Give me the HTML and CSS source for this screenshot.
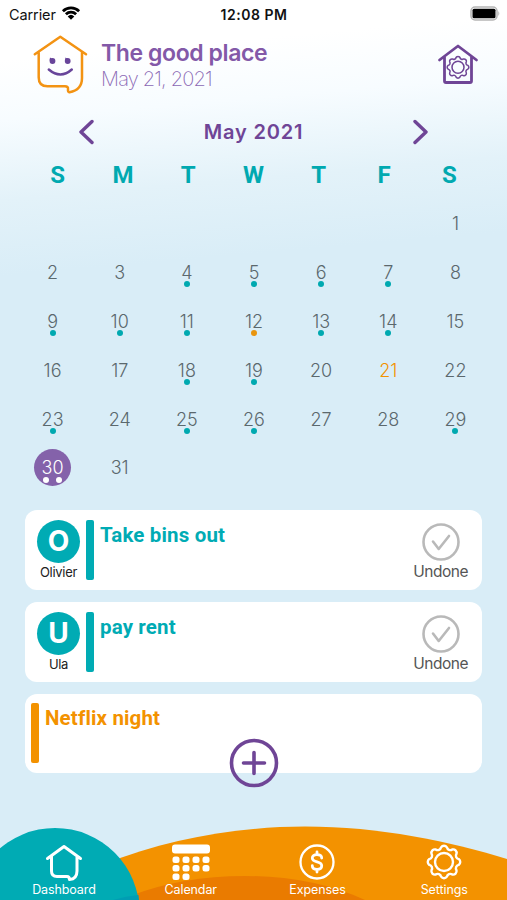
FILE: index.html
```html
<!DOCTYPE html>
<html lang="en">
<head>
    <meta charset="UTF-8">
    <meta name="viewport" content="width=device-width, initial-scale=1.0">
    <title>Dashboard</title>
    <link rel="stylesheet" href="styles.css">
</head>
<body>
    <svg class="sprite" width="0" height="0">
        <symbol id="gear" viewBox="-18 -18 36 36">
            <path d="M14.7-2.9A3.5 3.5 0 0 1 14.7 2.9A3.5 3.5 0 0 0 12.5 8.3A3.5 3.5 0 0 1 8.3 12.5A3.5 3.5 0 0 0 2.9 14.7A3.5 3.5 0 0 1-2.9 14.7A3.5 3.5 0 0 0-8.3 12.5A3.5 3.5 0 0 1-12.5 8.3A3.5 3.5 0 0 0-14.7 2.9A3.5 3.5 0 0 1-14.7-2.9A3.5 3.5 0 0 0-12.5-8.3A3.5 3.5 0 0 1-8.3-12.5A3.5 3.5 0 0 0-2.9-14.7A3.5 3.5 0 0 1 2.9-14.7A3.5 3.5 0 0 0 8.3-12.5A3.5 3.5 0 0 1 12.5-8.3A3.5 3.5 0 0 0 14.7-2.9Z"/>
            <circle r="9"/>
        </symbol>
        <symbol id="check" viewBox="0 0 38 38">
            <circle cx="19" cy="19" r="17.5"/>
            <path d="M11 18.5l5.7 7.5L27 13"/>
        </symbol>
    </svg>

    <div class="status-bar">
        <div class="carrier">
            <span>Carrier</span>
            <svg width="20" height="14" viewBox="0 0 20 14">
                <path d="M1.900 5.200a11.600 11.600 0 0 1 16.200 0M4.900 8.300a7.300 7.300 0 0 1 10.200 0" fill="none" stroke="#000" stroke-width="2.800"/>
                <path d="M6.700 10.400a4.800 4.800 0 0 1 6.600 0L10 13.800z"/>
            </svg>
        </div>
        <span class="time">12:08 PM</span>
        <svg class="battery" width="31" height="15" viewBox="0 0 31 15">
            <rect x="1" y="1" width="26" height="13" rx="4" fill="#fff" stroke="#b5b5b5" stroke-width="1.500"/>
            <rect x="2.500" y="2.700" width="23" height="9.600" rx="1.500"/>
            <path d="M28.300 5q2 2.500 0 5z" fill="#b5b5b5"/>
        </svg>
    </div>

    <header class="header">
        <svg class="logo" width="56" height="60" viewBox="0 0 56 60">
            <path d="M1.800 20.300L27.300 2.700l25.700 17.600M5.700 18.500V43.500q0 8.800 8.800 8.800H32q3.300 0 3 2.700-.3 3.500 1.500 3.200Q49 56 49 44V18.500" stroke="#f39313" stroke-width="2.500"/>
            <path d="M15.800 35.500q11.700 10 23 0" stroke="#68459a" stroke-width="2.500"/>
            <g fill="#68459a" stroke="none">
                <circle cx="19.500" cy="27" r="2.900"/>
                <circle cx="34.700" cy="27" r="2.900"/>
                <path d="M16.500 26.500l.5-3 2.300 1.500zM32 26.500l.5-3 2.300 1.500z"/>
            </g>
        </svg>
        <div class="heading">
            <h1>The good place</h1>
            <p>May 21, 2021</p>
        </div>
        <svg class="home-settings" width="42" height="42" viewBox="0 0 42 42">
            <path d="M2.500 17L21 3l18.500 14M7.500 14v24q0 1.500 1.500 1.500h24q1.500 0 1.500-1.500V14" stroke-width="2.800"/>
            <use href="#gear" x="9" y="12.300" width="24" height="24" stroke-width="2.300"/>
        </svg>
    </header>

    <section class="calendar">
        <div class="month">
            <svg width="16" height="26" viewBox="0 0 16 26"><path d="M14 2.500L3 13l11 10.500"/></svg>
            <h2>May 2021</h2>
            <svg width="16" height="26" viewBox="0 0 16 26"><path d="M2 2.500L13 13 2 23.500"/></svg>
        </div>
        <div class="weekdays">
            <span>S</span><span>M</span><span>T</span><span>W</span><span>T</span><span>F</span><span>S</span>
        </div>
        <div class="days">
            <span class="day first">1</span>
            <span class="day">2</span>
            <span class="day">3</span>
            <span class="day">4<i></i></span>
            <span class="day">5<i></i></span>
            <span class="day">6<i></i></span>
            <span class="day">7<i></i></span>
            <span class="day">8</span>
            <span class="day">9<i></i></span>
            <span class="day">10<i></i></span>
            <span class="day">11<i></i></span>
            <span class="day">12<i class="event"></i></span>
            <span class="day">13<i></i></span>
            <span class="day">14<i></i></span>
            <span class="day">15</span>
            <span class="day">16</span>
            <span class="day">17</span>
            <span class="day">18<i></i></span>
            <span class="day">19<i></i></span>
            <span class="day">20</span>
            <span class="day today">21</span>
            <span class="day">22</span>
            <span class="day">23<i></i></span>
            <span class="day">24</span>
            <span class="day">25<i></i></span>
            <span class="day">26<i></i></span>
            <span class="day">27</span>
            <span class="day">28</span>
            <span class="day">29<i></i></span>
            <span class="day selected">30<i class="left"></i><i class="right"></i></span>
            <span class="day">31</span>
        </div>
    </section>

    <main class="tasks">
        <article class="card">
            <div class="person">
                <span class="avatar">O</span>
                <span class="name">Olivier</span>
            </div>
            <div class="bar"></div>
            <h3>Take bins out</h3>
            <div class="status">
                <svg width="38" height="38"><use href="#check"/></svg>
                <span>Undone</span>
            </div>
        </article>
        <article class="card">
            <div class="person">
                <span class="avatar">U</span>
                <span class="name">Ula</span>
            </div>
            <div class="bar"></div>
            <h3>pay rent</h3>
            <div class="status">
                <svg width="38" height="38"><use href="#check"/></svg>
                <span>Undone</span>
            </div>
        </article>
        <article class="card card-event">
            <div class="bar"></div>
            <h3>Netflix night</h3>
            <svg class="add" width="50" height="50" viewBox="0 0 50 50">
                <circle cx="25" cy="25" r="22.500"/>
                <path d="M25 14.500v21M14.500 25h21"/>
            </svg>
        </article>
    </main>

    <nav class="tabs">
        <svg class="tabs-bg" width="507" height="76" viewBox="0 0 507 76">
            <path fill="#f39200" d="M105 40C165 15 240 2.500 305 2.500c75 0 145 15 202 32.500v41H105z"/>
            <path fill="#ea7b00" d="M130 72q52-20 115-20 67 0 120 24H130z"/>
            <circle fill="#00abb4" cx="55" cy="88.500" r="84.500"/>
            <path fill="#009db3" d="M113 76q13-4 25.500-5l.5 5z"/>
        </svg>
        <a class="tab">
            <svg width="38" height="38" viewBox="0 0 38 38">
                <path d="M2.500 15.500L19 3.500l16.500 12M6.500 13v15q0 5.500 5.500 5.500h10q2.500 0 2.500 3 7.500-.5 7.500-8.500V13" stroke-width="3"/>
            </svg>
            <span>Dashboard</span>
        </a>
        <a class="tab">
            <svg width="38" height="38" viewBox="0 0 38 38">
                <g fill="#fff" stroke="none">
                    <rect x="0" y="1.500" width="38" height="9" rx="3"/>
                    <rect x="0.500" y="13.500" width="7" height="6.500" rx="2.500"/>
                    <rect x="10.500" y="13.500" width="7" height="6.500" rx="2.500"/>
                    <rect x="20.500" y="13.500" width="7" height="6.500" rx="2.500"/>
                    <rect x="30.500" y="13.500" width="7" height="6.500" rx="2.500"/>
                    <rect x="0.500" y="22" width="7" height="6.500" rx="2.500"/>
                    <rect x="10.500" y="22" width="7" height="6.500" rx="2.500"/>
                    <rect x="20.500" y="22" width="7" height="6.500" rx="2.500"/>
                    <rect x="30.500" y="22" width="7" height="6.500" rx="2.500"/>
                    <rect x="0.500" y="30.500" width="7" height="6.500" rx="2.500"/>
                    <rect x="10.500" y="30.500" width="7" height="6.500" rx="2.500"/>
                </g>
            </svg>
            <span>Calendar</span>
        </a>
        <a class="tab">
            <svg width="38" height="38" viewBox="0 0 38 38">
                <circle cx="19" cy="19" r="16.500" stroke-width="2.300"/>
                <path d="M23.700 15q0-3.300-4.700-3.300t-4.700 3.300c0 5.200 9.400 2.700 9.400 7.700 0 2.300-1.700 3.600-4.700 3.600s-4.700-1.300-4.700-3.600M19 9v2.500M19 26.500V29" stroke-width="2.800"/>
            </svg>
            <span>Expenses</span>
        </a>
        <a class="tab">
            <svg width="38" height="38" viewBox="0 0 38 38">
                <use href="#gear" x="1" y="1" width="36" height="36" stroke-width="2.400"/>
            </svg>
            <span>Settings</span>
        </a>
    </nav>
</body>
</html>
```

FILE: styles.css
```css
* {
    box-sizing: border-box;
}
body {
    width: 507px;
    height: 900px;
    margin: 0;
    overflow: hidden;
    display: flex;
    flex-direction: column;
    font-family: Inter, "Liberation Sans", sans-serif;
    background: linear-gradient(175deg, #fff 0, #fff 60px, #f7fcff 120px, #e3f2f9 200px, #d9edf7 275px, #d9edf7 100%);
}
h1, h2, h3, p {
    margin: 0;
}
svg {
    display: block;
    flex: none;
}
.sprite {
    position: absolute;
}

.status-bar {
    height: 28px;
    padding: 0 8px 0 9px;
    display: grid;
    grid-template-columns: 1fr auto 1fr;
    align-items: center;
    font-size: 14.5px;
    color: #111;
}
.carrier {
    display: flex;
    align-items: center;
    gap: 5px;
    letter-spacing: -0.1px;
}
.carrier svg {
    margin-top: -3px;
}
.time {
    font-size: 14px;
    font-weight: 600;
    letter-spacing: 0.5px;
}
.battery {
    justify-self: end;
    margin-top: -1px;
    margin-right: -2px;
}

.header {
    height: 76px;
    padding: 6px 28px 0 33px;
    display: flex;
}
.logo, .home-settings {
    fill: none;
    stroke-linecap: round;
    stroke-linejoin: round;
}
.heading {
    flex: 1;
    padding: 6px 0 0 12px;
}
.heading h1 {
    font-size: 23px;
    line-height: 27px;
    font-weight: 600;
    letter-spacing: -0.4px;
    color: #8359a8;
}
.heading p {
    font-size: 20px;
    line-height: 25px;
    font-weight: 200;
    letter-spacing: -0.8px;
    color: #8a68b4;
}
.home-settings {
    margin-top: 9px;
    stroke: #6f4596;
}

.month {
    height: 56px;
    padding: 0 78px;
    display: flex;
    align-items: center;
    justify-content: space-between;
}
.month svg {
    fill: none;
    stroke: #6f4596;
    stroke-width: 3.4;
    stroke-linecap: round;
    stroke-linejoin: round;
}
.month h2 {
    font-size: 20px;
    font-weight: 600;
    letter-spacing: 0.8px;
    color: #6f4596;
}
.weekdays {
    height: 39px;
    margin: -5px 25px 0;
    display: grid;
    grid-template-columns: repeat(7, 1fr);
    align-items: center;
    text-align: center;
    font-family: Roboto, sans-serif;
    font-size: 24px;
    font-weight: 700;
    color: #00a9b0;
}
.days {
    margin: 5px 18px 0 19px;
    display: grid;
    grid-template-columns: repeat(7, 1fr);
    grid-auto-rows: 48.9px;
    justify-items: center;
    align-items: center;
}
.day {
    position: relative;
    width: 37px;
    height: 37px;
    line-height: 37px;
    text-align: center;
    font-size: 18px;
    font-weight: 300;
    color: #5b686d;
}
.day.first {
    grid-column: 7;
}
.day.today {
    color: #f39200;
}
.day.selected {
    border-radius: 50%;
    background: #8462aa;
    color: #fff;
}
/* task / event markers */
.day i {
    position: absolute;
    left: 15.5px;
    bottom: 3.5px;
    width: 6px;
    height: 6px;
    border-radius: 50%;
    background: #00a9b0;
}
.day i.event {
    background: #e8950f;
}
.day.selected i {
    background: #fff;
}
.day i.left {
    left: 8.5px;
}
.day i.right {
    left: 22px;
}

.tasks {
    margin: 18px 25px 0;
    display: flex;
    flex-direction: column;
    gap: 12.2px;
}
.card {
    position: relative;
    height: 79.5px;
    padding: 9.5px 14px 9px 12px;
    display: flex;
    border-radius: 12px;
    background: #fff;
    color: #00abb4;
}
.person {
    width: 43px;
    display: flex;
    flex-direction: column;
    align-items: center;
}
.avatar {
    width: 43px;
    height: 43px;
    line-height: 43px;
    text-align: center;
    border-radius: 50%;
    background: #00abb4;
    color: #fff;
    font-size: 28px;
    font-weight: 700;
}
.name {
    margin-top: 1px;
    font-size: 13px;
    line-height: 17px;
    letter-spacing: -0.3px;
    color: #222;
}
.bar {
    width: 8px;
    height: 60px;
    margin-left: 6px;
    border-radius: 2px;
    background: currentColor;
}
.card h3 {
    flex: 1;
    margin: 3px 0 0 6px;
    font-family: Roboto, sans-serif;
    font-size: 20.5px;
    line-height: 24px;
    font-weight: 700;
    letter-spacing: 0.15px;
    color: inherit;
}
.status {
    padding-top: 3px;
    display: flex;
    flex-direction: column;
    align-items: center;
    font-size: 15.5px;
    line-height: 20px;
    letter-spacing: -0.5px;
    color: #555;
}
.status svg {
    margin-bottom: 1px;
    fill: none;
    stroke: #b9b9b9;
    stroke-width: 2.6;
    stroke-linecap: round;
    stroke-linejoin: round;
}
.card-event {
    padding-left: 0;
    color: #f39200;
}
.add {
    position: absolute;
    left: 204px;
    top: 44.5px;
    fill: none;
    stroke: #6f4596;
    stroke-width: 3.6;
    stroke-linecap: round;
}

.tabs {
    position: relative;
    height: 76px;
    margin-top: auto;
    padding-top: 19px;
    display: grid;
    grid-template-columns: repeat(4, 1fr);
}
.tabs-bg {
    position: absolute;
    left: 0;
    bottom: 0;
}
.tab {
    position: relative;
    left: 0.6px;
    display: flex;
    flex-direction: column;
    align-items: center;
    font-size: 12.5px;
    line-height: 17px;
    letter-spacing: -0.1px;
    color: #fff;
}
.tab svg {
    fill: none;
    stroke: #fff;
    stroke-linecap: round;
    stroke-linejoin: round;
}
```
